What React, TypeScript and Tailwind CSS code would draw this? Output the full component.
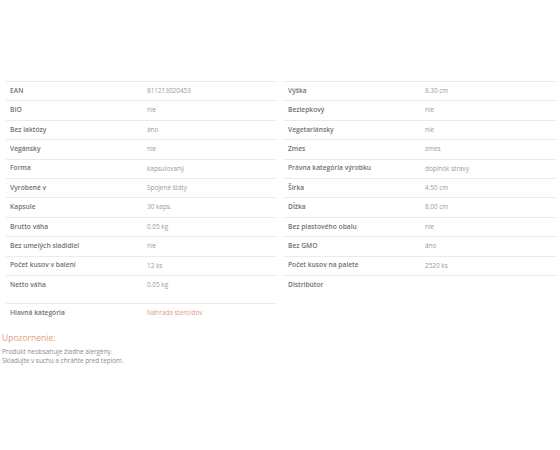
import React from "react";

const left: [string, string][] = [
  ["EAN", "811213020453"],
  ["BIO", "nie"],
  ["Bez laktózy", "áno"],
  ["Vegánsky", "nie"],
  ["Forma", "kapsulovaný"],
  ["Vyrobené v", "Spojené štáty"],
  ["Kapsule", "30 kaps."],
  ["Brutto váha", "0.05 kg"],
  ["Bez umelých sladidiel", "nie"],
  ["Počet kusov v balení", "12 ks"],
  ["Netto váha", "0.05 kg"],
];

const right: [string, string][] = [
  ["Výška", "8.30 cm"],
  ["Bezlepkový", "nie"],
  ["Vegetariánsky", "nie"],
  ["Zmes", "zmes"],
  ["Právna kategória výrobku", "doplnok stravy"],
  ["Šírka", "4.50 cm"],
  ["Dĺžka", "8.00 cm"],
  ["Bez plastového obalu", "nie"],
  ["Bez GMO", "áno"],
  ["Počet kusov na palete", "2520 ks"],
  ["Distribútor", ""],
];

function Row({ k, v, vClass }: { k: string; v: string; vClass?: string }) {
  return (
    <div className="flex items-center h-[19.4px] border-t border-[#ebebeb]">
      <div className="w-[141px] pl-[4px] font-semibold text-[6.7px] text-[#717171]">{k}</div>
      <div className={vClass ?? "text-[#9a9a9a]"}>{v}</div>
    </div>
  );
}

export default function App() {
  return (
    <div
      className="w-[560px] h-[450px] bg-white pt-[81px] text-[6.4px] leading-none"
      style={{ fontFamily: '"Open Sans", sans-serif' }}
    >
      <div className="flex gap-[8px] pl-[6px] pr-[4px]">
        <div className="w-[270px]">
          {left.map(([k, v]) => (
            <Row key={k} k={k} v={v} />
          ))}
          <div className="mt-[9px]">
            <Row k="Hlavná kategória" v="Náhrada steroidov" vClass="text-[#dc9a86]" />
          </div>
        </div>
        <div className="w-[272px]">
          {right.map(([k, v]) => (
            <Row key={k} k={k} v={v} />
          ))}
        </div>
      </div>
      <div className="mt-[9px] pl-[2px]">
        <div className="text-[8.5px] leading-[12px] text-[#e0a07e]">Upozornenie:</div>
        <div className="mt-[3px] text-[6.4px] leading-[9.5px] text-[#8a8a8a]">
          <div>Produkt neobsahuje žiadne alergény.</div>
          <div>Skladujte v suchu a chráňte pred teplom.</div>
        </div>
      </div>
    </div>
  );
}
